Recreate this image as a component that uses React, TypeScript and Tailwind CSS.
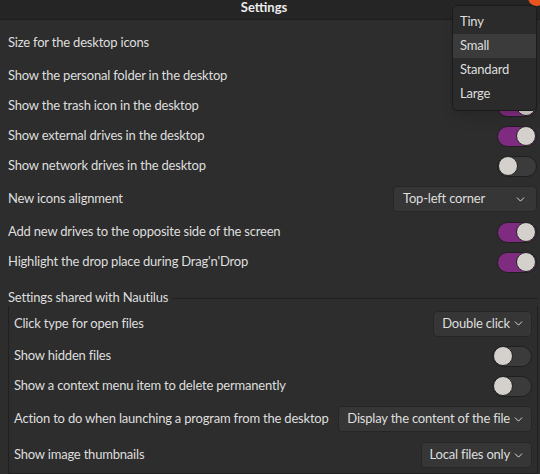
import { ChevronDown } from "lucide-react";

function Toggle({ on }: { on: boolean }) {
  return (
    <div
      className={`flex h-[21px] w-[40px] shrink-0 items-center rounded-full border border-[#1f1f1f] ${
        on ? "justify-end bg-[#7f2b7f]" : "justify-start bg-[#3b3b3b]"
      }`}
    >
      <div className="h-[20px] w-[20px] rounded-full border border-[#222] bg-[#d4d1cd]" />
    </div>
  );
}

function Combo({ label, wide }: { label: string; wide?: boolean }) {
  return (
    <div
      className={`flex h-[26px] shrink-0 items-center whitespace-nowrap rounded-[4px] border border-[#262626] bg-[#363636] pl-[8px] ${
        wide ? "w-[144px] justify-between pl-[9px] pr-[9px]" : "gap-[2px] pr-[6px]"
      }`}
    >
      <span>{label}</span>
      <ChevronDown size={13} strokeWidth={1.8} className="text-[#dcdcdc]" />
    </div>
  );
}

type Row = { label: string; h: number; ctl?: "on" | "off" | string; wide?: boolean };

const TOP: Row[] = [
  { label: "Size for the desktop icons", h: 36 },
  { label: "Show the personal folder in the desktop", h: 30, ctl: "on" },
  { label: "Show the trash icon in the desktop", h: 30, ctl: "on" },
  { label: "Show external drives in the desktop", h: 30, ctl: "on" },
  { label: "Show network drives in the desktop", h: 30, ctl: "off" },
  { label: "New icons alignment", h: 36, ctl: "Top-left corner", wide: true },
  { label: "Add new drives to the opposite side of the screen", h: 30, ctl: "on" },
  { label: "Highlight the drop place during Drag'n'Drop", h: 30, ctl: "on" },
];

const SHARED: Row[] = [
  { label: "Click type for open files", h: 35, ctl: "Double click" },
  { label: "Show hidden files", h: 30, ctl: "off" },
  { label: "Show a context menu item to delete permanently", h: 30, ctl: "off" },
  { label: "Action to do when launching a program from the desktop", h: 36, ctl: "Display the content of the file" },
  { label: "Show image thumbnails", h: 36, ctl: "Local files only" },
];

function Control({ row }: { row: Row }) {
  if (!row.ctl) return null;
  if (row.ctl === "on") return <Toggle on />;
  if (row.ctl === "off") return <Toggle on={false} />;
  return <Combo label={row.ctl} wide={row.wide} />;
}

export default function App() {
  return (
    <div
      className="relative h-[474px] w-[540px] overflow-hidden bg-[#2d2d2d] text-[13px] tracking-[-0.2px] text-[#dedede]"
      style={{ fontFamily: "Lato, 'Noto Sans', sans-serif" }}
    >
      {/* ─── Title bar ─── */}
      <div className="flex h-[20px] items-center justify-center border-b border-[#1e1e1e] bg-[#252525] pb-[3px] pr-[12px]">
        <span className="font-bold tracking-normal text-[#ececec]">Settings</span>
      </div>

      {/* ─── Desktop settings ─── */}
      <div className="pl-2 pr-[3px] pt-[5px]">
        {TOP.map((r) => (
          <div key={r.label} className="flex items-center justify-between whitespace-nowrap" style={{ height: r.h }}>
            <span>{r.label}</span>
            <Control row={r} />
          </div>
        ))}
      </div>

      {/* ─── Shared with Nautilus ─── */}
      <div className="mt-[13px] pl-2 pr-[2px]">
        <div className="flex h-[16px] items-center">
          <span className="pr-[4px]">Settings shared with Nautilus</span>
          <div className="h-0 flex-1 border-t border-[#202020]" />
        </div>
        <div className="border-x border-b border-[#202020] pl-[5px] pr-[5px]">
          {SHARED.map((r) => (
            <div key={r.label} className="flex items-center justify-between gap-2 whitespace-nowrap" style={{ height: r.h }}>
              <span>{r.label}</span>
              <Control row={r} />
            </div>
          ))}
        </div>
      </div>

      {/* ─── Icon size popup ─── */}
      <div className="absolute left-[452px] top-[5px] w-[85px] rounded-[5px] border border-[#1b1b1b] bg-[#2b2b2b] py-[4px] shadow-lg">
        {["Tiny", "Small", "Standard", "Large"].map((s) => (
          <div
            key={s}
            className={`flex h-[24px] items-center pl-[7px] ${s === "Small" ? "bg-[#3b3b3b]" : ""}`}
          >
            {s}
          </div>
        ))}
      </div>

      {/* window close button peeking in */}
      <div className="absolute right-[-5px] top-[-11px] h-[17px] w-[17px] rounded-full bg-[#e95420]" />
    </div>
  );
}
